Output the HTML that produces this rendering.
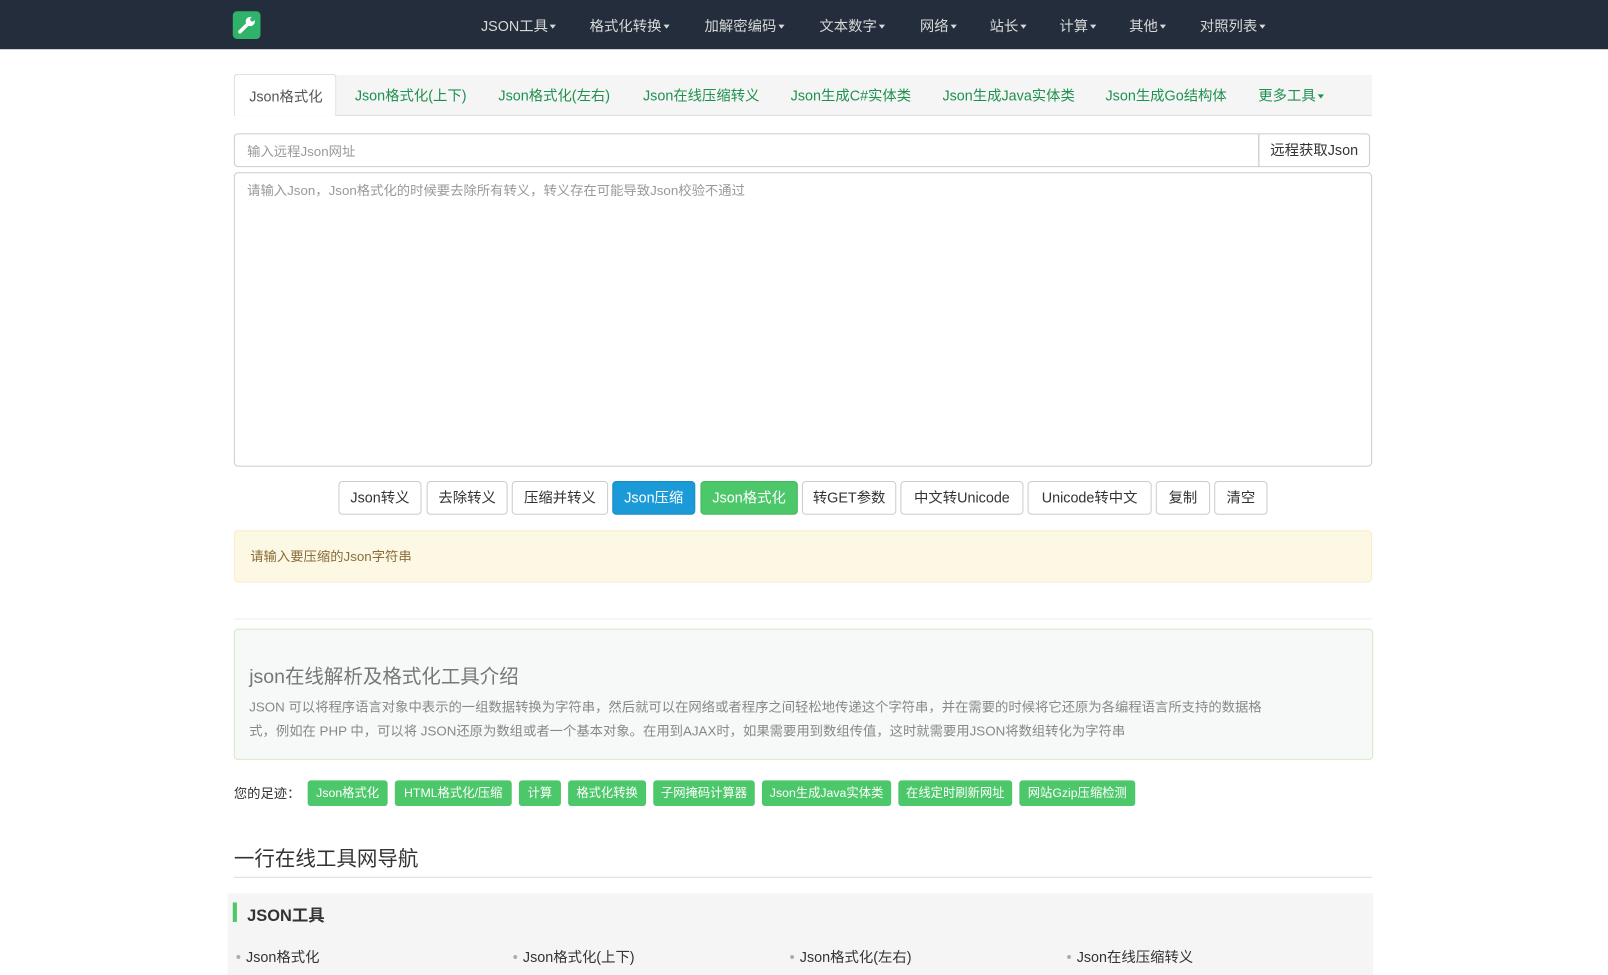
<!DOCTYPE html>
<html><head><meta charset="utf-8"><style>
*{box-sizing:border-box;margin:0;padding:0}
html,body{width:1608px;height:975px;overflow:hidden;background:#fff}
body{font-family:"Liberation Sans","Noto Sans CJK SC",sans-serif;font-size:14px;color:#333;position:relative}
#w{position:absolute;left:0;top:0;width:1568px;height:951px;transform:scale(1.02551);transform-origin:0 0}
.nav{position:absolute;left:0;top:0;width:1568px;height:48px;background:#232d3b}
.logo{position:absolute;left:227px;top:11px;width:27px;height:27px;background:#2fb36b;border-radius:4px}
.nav span{position:absolute;top:15px;color:#d8d8d8;font-size:14px;white-space:nowrap}
.car{display:inline-block;border-top:4px solid;border-left:3.5px solid transparent;border-right:3.5px solid transparent;vertical-align:middle;margin-left:2px}
.tabs{position:absolute;left:228px;top:73px;width:1110px;height:40px;background:#f5f5f5;border-bottom:1px solid #ddd}
.tabs span{position:absolute;top:10px;color:#1e9150;font-size:14px;white-space:nowrap}
.tabs .act{top:-1px;left:0;height:41px;width:100px;background:#fff;border:1px solid #ddd;border-bottom:none;border-radius:4px 4px 0 0;color:#555;padding:11px 0 0 14px}
.inp{position:absolute;left:228px;top:130px;width:1000px;height:33px;border:1px solid #ccc;border-radius:4px 0 0 4px;color:#999;padding:6px 12px;font-size:13px}
.ibtn{position:absolute;left:1227px;top:130px;width:109px;height:33px;border:1px solid #ccc;border-radius:0 4px 4px 0;padding:5px 0;text-align:center;font-size:14px;white-space:nowrap}
.ta{position:absolute;left:228px;top:168px;width:1110px;height:287px;border:1px solid #ccc;border-radius:4px;color:#999;padding:6px 12px;font-size:13px}
.btn{position:absolute;top:469px;height:33px;border:1px solid #ccc;border-radius:4px;background:#fff;text-align:center;line-height:31px;font-size:14px;white-space:nowrap}
.alert{position:absolute;left:228px;top:517px;width:1110px;height:51px;background:#fcf8e3;border:1px solid #faebcc;border-radius:4px;color:#8a6d3b;padding:14px 15px;font-size:13px}
.hr{position:absolute;left:228px;width:1110px;border-top:1px solid #eee}
.intro{position:absolute;left:228px;top:613px;width:1111px;height:128px;background:#f6f9f7;border:1px solid #d6e9c6;border-radius:4px;padding:31px 14px;color:#777}
.intro h3{font-size:19px;font-weight:normal;color:#777;margin-bottom:6px}
.intro p{font-size:13px;line-height:23px;color:#888}
.fp{position:absolute;left:228px;top:763px;font-size:13px}
.tag{position:absolute;top:761px;height:25px;background:#4cc76a;color:#fff;font-size:12px;line-height:25px;text-align:center;border-radius:3px;white-space:nowrap}
.h2{position:absolute;left:228px;top:821px;font-size:20px;color:#333}
.sec{position:absolute;left:222px;top:871px;width:1117px;height:104px;background:#f5f5f5}
.bar{position:absolute;left:227px;top:880px;width:4px;height:19px;background:#4cc76a}
.sec h4{position:absolute;left:19px;top:8px;font-size:16px;font-weight:bold}
.li{position:absolute;top:923px;font-size:14px;color:#333}
.li:before{content:"•";color:#aaa;margin-right:5px}
</style></head><body><div id="w">
<div class="nav">
<div class="logo"><svg width="27" height="27" viewBox="0 0 27 27"><path d="M7 20 L15 12" stroke="#fff" stroke-width="3.5" stroke-linecap="round"/><circle cx="17" cy="10" r="4.5" fill="#fff"/><circle cx="19" cy="8" r="2" fill="#2fb36b"/></svg></div>
<span style="left:469px">JSON工具<i class="car"></i></span>
<span style="left:575px">格式化转换<i class="car"></i></span>
<span style="left:687px">加解密编码<i class="car"></i></span>
<span style="left:799px">文本数字<i class="car"></i></span>
<span style="left:897px">网络<i class="car"></i></span>
<span style="left:965px">站长<i class="car"></i></span>
<span style="left:1033px">计算<i class="car"></i></span>
<span style="left:1101px">其他<i class="car"></i></span>
<span style="left:1170px">对照列表<i class="car"></i></span>
</div>
<div class="tabs">
<span class="act">Json格式化</span>
<span style="left:118px">Json格式化(上下)</span>
<span style="left:258px">Json格式化(左右)</span>
<span style="left:399px">Json在线压缩转义</span>
<span style="left:543px">Json生成C#实体类</span>
<span style="left:691px">Json生成Java实体类</span>
<span style="left:850px">Json生成Go结构体</span>
<span style="left:999px">更多工具<i class="car"></i></span>
</div>
<div class="inp">输入远程Json网址</div>
<div class="ibtn">远程获取Json</div>
<div class="ta">请输入Json，Json格式化的时候要去除所有转义，转义存在可能导致Json校验不通过</div>
<div class="btn" style="left:330px;width:81px">Json转义</div>
<div class="btn" style="left:416px;width:79px">去除转义</div>
<div class="btn" style="left:499px;width:94px">压缩并转义</div>
<div class="btn" style="left:597px;width:81px;background:#1a9ad6;border-color:#1a8cc4;color:#fff">Json压缩</div>
<div class="btn" style="left:683px;width:95px;background:#4cc76a;border-color:#43b85f;color:#fff">Json格式化</div>
<div class="btn" style="left:782px;width:92px">转GET参数</div>
<div class="btn" style="left:878px;width:120px">中文转Unicode</div>
<div class="btn" style="left:1002px;width:121px">Unicode转中文</div>
<div class="btn" style="left:1127px;width:53px">复制</div>
<div class="btn" style="left:1184px;width:52px">清空</div>
<div class="alert">请输入要压缩的Json字符串</div>
<div class="hr" style="top:603px"></div>
<div class="intro"><h3>json在线解析及格式化工具介绍</h3><p>JSON 可以将程序语言对象中表示的一组数据转换为字符串，然后就可以在网络或者程序之间轻松地传递这个字符串，并在需要的时候将它还原为各编程语言所支持的数据格<br>式，例如在 PHP 中，可以将 JSON还原为数组或者一个基本对象。在用到AJAX时，如果需要用到数组传值，这时就需要用JSON将数组转化为字符串</p></div>
<div class="fp">您的足迹：</div>
<div class="tag" style="left:300px;width:78px">Json格式化</div>
<div class="tag" style="left:385px;width:114px">HTML格式化/压缩</div>
<div class="tag" style="left:506px;width:41px">计算</div>
<div class="tag" style="left:554px;width:76px">格式化转换</div>
<div class="tag" style="left:637px;width:99px">子网掩码计算器</div>
<div class="tag" style="left:743px;width:126px">Json生成Java实体类</div>
<div class="tag" style="left:876px;width:111px">在线定时刷新网址</div>
<div class="tag" style="left:994px;width:113px">网站Gzip压缩检测</div>
<div class="h2">一行在线工具网导航</div>
<div class="hr" style="top:855px;border-color:#ddd"></div>
<div class="sec"><h4>JSON工具</h4></div>
<div class="bar"></div>
<div class="li" style="left:230px">Json格式化</div>
<div class="li" style="left:500px">Json格式化(上下)</div>
<div class="li" style="left:770px">Json格式化(左右)</div>
<div class="li" style="left:1040px">Json在线压缩转义</div>
</div></body></html>
